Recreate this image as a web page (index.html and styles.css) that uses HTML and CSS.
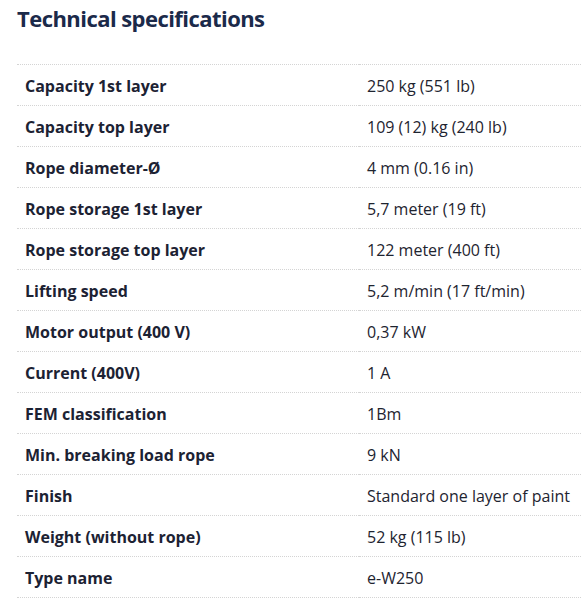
FILE: index.html
```html
<!DOCTYPE html>
<html>
<head>
<meta charset="utf-8">
<link rel="stylesheet" href="styles.css">
</head>
<body>
<div class="page">
  <h2 class="title">Technical specifications</h2>
  <table class="specs">
    <tr><th>Capacity 1st layer</th><td>250 kg (551 lb)</td></tr>
    <tr><th>Capacity top layer</th><td>109 (12) kg (240 lb)</td></tr>
    <tr><th>Rope diameter-Ø</th><td>4 mm (0.16 in)</td></tr>
    <tr><th>Rope storage 1st layer</th><td>5,7 meter (19 ft)</td></tr>
    <tr><th>Rope storage top layer</th><td>122 meter (400 ft)</td></tr>
    <tr><th>Lifting speed</th><td>5,2 m/min (17 ft/min)</td></tr>
    <tr><th>Motor output (400 V)</th><td>0,37 kW</td></tr>
    <tr><th>Current (400V)</th><td>1 A</td></tr>
    <tr><th>FEM classification</th><td>1Bm</td></tr>
    <tr><th>Min. breaking load rope</th><td>9 kN</td></tr>
    <tr><th>Finish</th><td>Standard one layer of paint</td></tr>
    <tr><th>Weight (without rope)</th><td>52 kg (115 lb)</td></tr>
    <tr><th>Type name</th><td>e-W250</td></tr>
  </table>
</div>
</body>
</html>
```
FILE: styles.css
```css
html, body {
  margin: 0;
  padding: 0;
  background: #fff;
}
.page {
  padding: 0 0 0 17px;
  font-family: "Open Sans", "Liberation Sans", sans-serif;
}
.title {
  margin: 0;
  padding-top: 4px;
  font-size: 22px;
  line-height: 28px;
  font-weight: 700;
  color: #1b2a4a;
  letter-spacing: -0.55px;
}
.specs {
  margin-top: 32px;
  width: 570px;
  border-collapse: collapse;
  border-top: 1px dotted #d4d4d4;
}
.specs tr {
  border-bottom: 1px dotted #d4d4d4;
}
.specs th, .specs td {
  height: 38px;
  padding: 2px 8px 0;
  font-size: 16px;
  text-align: left;
  vertical-align: middle;
}
.specs th {
  width: 326px;
  font-weight: 700;
  color: #1c2233;
}
.specs td {
  font-weight: 400;
  color: #1e2430;
}
```
